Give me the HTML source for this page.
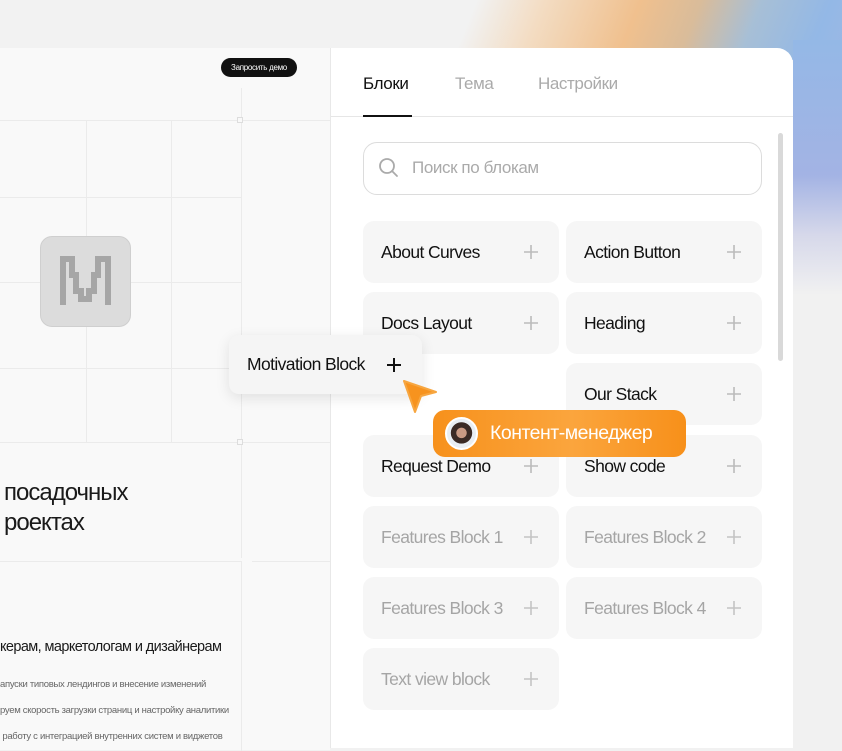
<!DOCTYPE html>
<html><head><meta charset="utf-8"><style>
*{margin:0;padding:0;box-sizing:border-box}
body{width:842px;height:750px;overflow:hidden;position:relative;font-family:"Liberation Sans","Noto Sans CJK SC",sans-serif;background:#f1f1f1;letter-spacing:-0.4px}
.bg{position:absolute;left:0;top:0;width:842px;height:60px;background:linear-gradient(112deg,#f2f2f2 0%,#f2f2f2 55%,#f3dcc2 63%,#f0c08e 74%,#d9bc9a 81%,#a7bfd6 88%,#93b8e6 96%,#9bb7e4 100%)}
.rs{position:absolute;left:793px;top:40px;width:49px;height:300px;background:linear-gradient(#94b8e6 0%,#a3b3e4 45%,#d6d8ea 65%,#f1f1f1 85%)}
.left{position:absolute;left:0;top:48px;width:330px;height:702px;background:#f9f9f9}
.l{position:absolute;background:#ebebeb}
.panel{position:absolute;left:330px;top:48px;width:463px;height:700px;background:#fff;border-radius:0 16px 0 0;border-left:1px solid #e8e8e8}
.tab{position:absolute;top:26px;font-size:17px;color:#aaa}
.card{position:absolute;width:196px;height:62px;background:#f6f6f6;border-radius:11px;font-size:17.5px;color:#111;padding:21px 0 0 18px;letter-spacing:-0.6px}
.card.d{color:#a5a5a5}
.card svg{position:absolute;left:161px;top:24px}
</style></head><body>
<div class="bg"></div><div class="rs"></div>
<div class="left">
  <div style="position:absolute;left:221px;top:10px;width:76px;height:19px;background:#111;border-radius:10px;color:#fff;font-size:8px;text-align:center;line-height:19px;letter-spacing:-0.3px">Запросить демо</div>
  <div class="l" style="left:0;top:72px;width:330px;height:1px"></div>
  <div class="l" style="left:0;top:149px;width:241px;height:1px"></div>
  <div class="l" style="left:0;top:234px;width:241px;height:1px"></div>
  <div class="l" style="left:0;top:320px;width:241px;height:1px"></div>
  <div class="l" style="left:0;top:394px;width:330px;height:1px"></div>
  <div class="l" style="left:0;top:513px;width:241px;height:1px"></div>
  <div class="l" style="left:252px;top:513px;width:78px;height:1px"></div>
  <div class="l" style="left:86px;top:72px;width:1px;height:322px"></div>
  <div class="l" style="left:171px;top:72px;width:1px;height:322px"></div>
  <div class="l" style="left:241px;top:40px;width:1px;height:470px"></div>
  <div class="l" style="left:241px;top:513px;width:1px;height:190px"></div>
  <div style="position:absolute;left:237px;top:69px;width:6px;height:6px;border:1px solid #ddd;background:#f9f9f9"></div>
  <div style="position:absolute;left:237px;top:391px;width:6px;height:6px;border:1px solid #ddd;background:#f9f9f9"></div>
  <div style="position:absolute;left:40px;top:188px;width:91px;height:91px;border-radius:12px;background:#dcdcdc;border:1px solid #cfcfcf">
    <svg width="91" height="91" viewBox="0 0 91 91" style="position:absolute;left:-1px;top:-1px"><path d="M23 69V23H32V39H36V55H41V63H49V55H54V39H58V23H68V69" fill="none" stroke="#a6a6a6" stroke-width="6" stroke-linejoin="miter"/></svg>
  </div>
  <div style="position:absolute;left:4px;top:430px;font-size:24px;color:#1a1a1a;line-height:30px;letter-spacing:-1px">посадочных<br>роектах</div>
  <div style="position:absolute;left:0;top:591px;font-size:14.5px;color:#1a1a1a;letter-spacing:-0.6px">керам, маркетологам и дизайнерам</div>
  <div style="position:absolute;left:0;top:624px;font-size:9.5px;color:#666;line-height:26px;letter-spacing:-0.3px">апуски типовых лендингов и внесение изменений<br>руем скорость загрузки страниц и настройку аналитики<br>&nbsp;работу с интеграцией внутренних систем и виджетов</div>
</div>
<div class="panel">
  <div class="tab" style="left:32px;color:#111">Блоки</div>
  <div class="tab" style="left:124px">Тема</div>
  <div class="tab" style="left:207px">Настройки</div>
  <div style="position:absolute;left:0;top:68px;width:462px;height:1px;background:#e6e6e6"></div>
  <div style="position:absolute;left:32px;top:67px;width:49px;height:2px;background:#111"></div>
  <div style="position:absolute;left:447px;top:85px;width:5px;height:228px;background:#d9d9d9;border-radius:3px"></div>
  <div style="position:absolute;left:32px;top:94px;width:399px;height:53px;border:1.5px solid #dcdcdc;border-radius:14px">
    <svg width="24" height="24" viewBox="0 0 24 24" style="position:absolute;left:13px;top:13px"><circle cx="10" cy="10" r="7" fill="none" stroke="#aaa" stroke-width="1.8"/><path d="M15 15l5 5" stroke="#aaa" stroke-width="1.8" stroke-linecap="round"/></svg>
    <div style="position:absolute;left:48px;top:15px;font-size:17px;color:#aaa">Поиск по блокам</div>
  </div>
  <div class="card" style="left:32px;top:173px">About Curves<svg width="14" height="14"><path d="M7 0V14M0 7H14" stroke="#bbb" stroke-width="1.6"/></svg></div>
  <div class="card" style="left:235px;top:173px">Action Button<svg width="14" height="14"><path d="M7 0V14M0 7H14" stroke="#bbb" stroke-width="1.6"/></svg></div>
  <div class="card" style="left:32px;top:244px">Docs Layout<svg width="14" height="14"><path d="M7 0V14M0 7H14" stroke="#bbb" stroke-width="1.6"/></svg></div>
  <div class="card" style="left:235px;top:244px">Heading<svg width="14" height="14"><path d="M7 0V14M0 7H14" stroke="#bbb" stroke-width="1.6"/></svg></div>
  <div class="card" style="left:235px;top:315px">Our Stack<svg width="14" height="14"><path d="M7 0V14M0 7H14" stroke="#bbb" stroke-width="1.6"/></svg></div>
  <div class="card" style="left:32px;top:387px">Request Demo<svg width="14" height="14"><path d="M7 0V14M0 7H14" stroke="#bbb" stroke-width="1.6"/></svg></div>
  <div class="card" style="left:235px;top:387px">Show code<svg width="14" height="14"><path d="M7 0V14M0 7H14" stroke="#bbb" stroke-width="1.6"/></svg></div>
  <div class="card d" style="left:32px;top:458px">Features Block 1<svg width="14" height="14"><path d="M7 0V14M0 7H14" stroke="#c4c4c4" stroke-width="1.6"/></svg></div>
  <div class="card d" style="left:235px;top:458px">Features Block 2<svg width="14" height="14"><path d="M7 0V14M0 7H14" stroke="#c4c4c4" stroke-width="1.6"/></svg></div>
  <div class="card d" style="left:32px;top:529px">Features Block 3<svg width="14" height="14"><path d="M7 0V14M0 7H14" stroke="#c4c4c4" stroke-width="1.6"/></svg></div>
  <div class="card d" style="left:235px;top:529px">Features Block 4<svg width="14" height="14"><path d="M7 0V14M0 7H14" stroke="#c4c4c4" stroke-width="1.6"/></svg></div>
  <div class="card d" style="left:32px;top:600px">Text view block<svg width="14" height="14"><path d="M7 0V14M0 7H14" stroke="#c4c4c4" stroke-width="1.6"/></svg></div>
</div>
<div style="position:absolute;left:229px;top:335px;width:193px;height:59px;background:#f5f5f5;border-radius:10px;box-shadow:0 4px 14px rgba(0,0,0,0.1);font-size:17.5px;color:#111;padding:19px 0 0 18px;letter-spacing:-0.6px">Motivation Block<svg width="14" height="14" style="position:absolute;left:158px;top:23px"><path d="M7 0V14M0 7H14" stroke="#111" stroke-width="2"/></svg></div>
<svg width="40" height="40" viewBox="0 0 40 40" style="position:absolute;left:401px;top:378px"><path d="M3 3L35 14L20 18L14 34Z" fill="#f7931e" stroke="#f7a640" stroke-width="2" stroke-linejoin="round"/></svg>
<div style="position:absolute;left:433px;top:410px;width:253px;height:47px;border-radius:12px;background:linear-gradient(90deg,#f7911c,#fba53d 55%,#f7901a);color:#fff;font-size:19.5px;padding:12px 0 0 57px;letter-spacing:-0.5px">Контент-менеджер
  <div style="position:absolute;left:12px;top:7px;width:33px;height:33px;border-radius:50%;background:radial-gradient(circle at 50% 48%,#c99a84 0 24%,#3a2a25 26% 50%,#e9eef3 52%);border:2px solid #fff"></div>
</div>
</body></html>
